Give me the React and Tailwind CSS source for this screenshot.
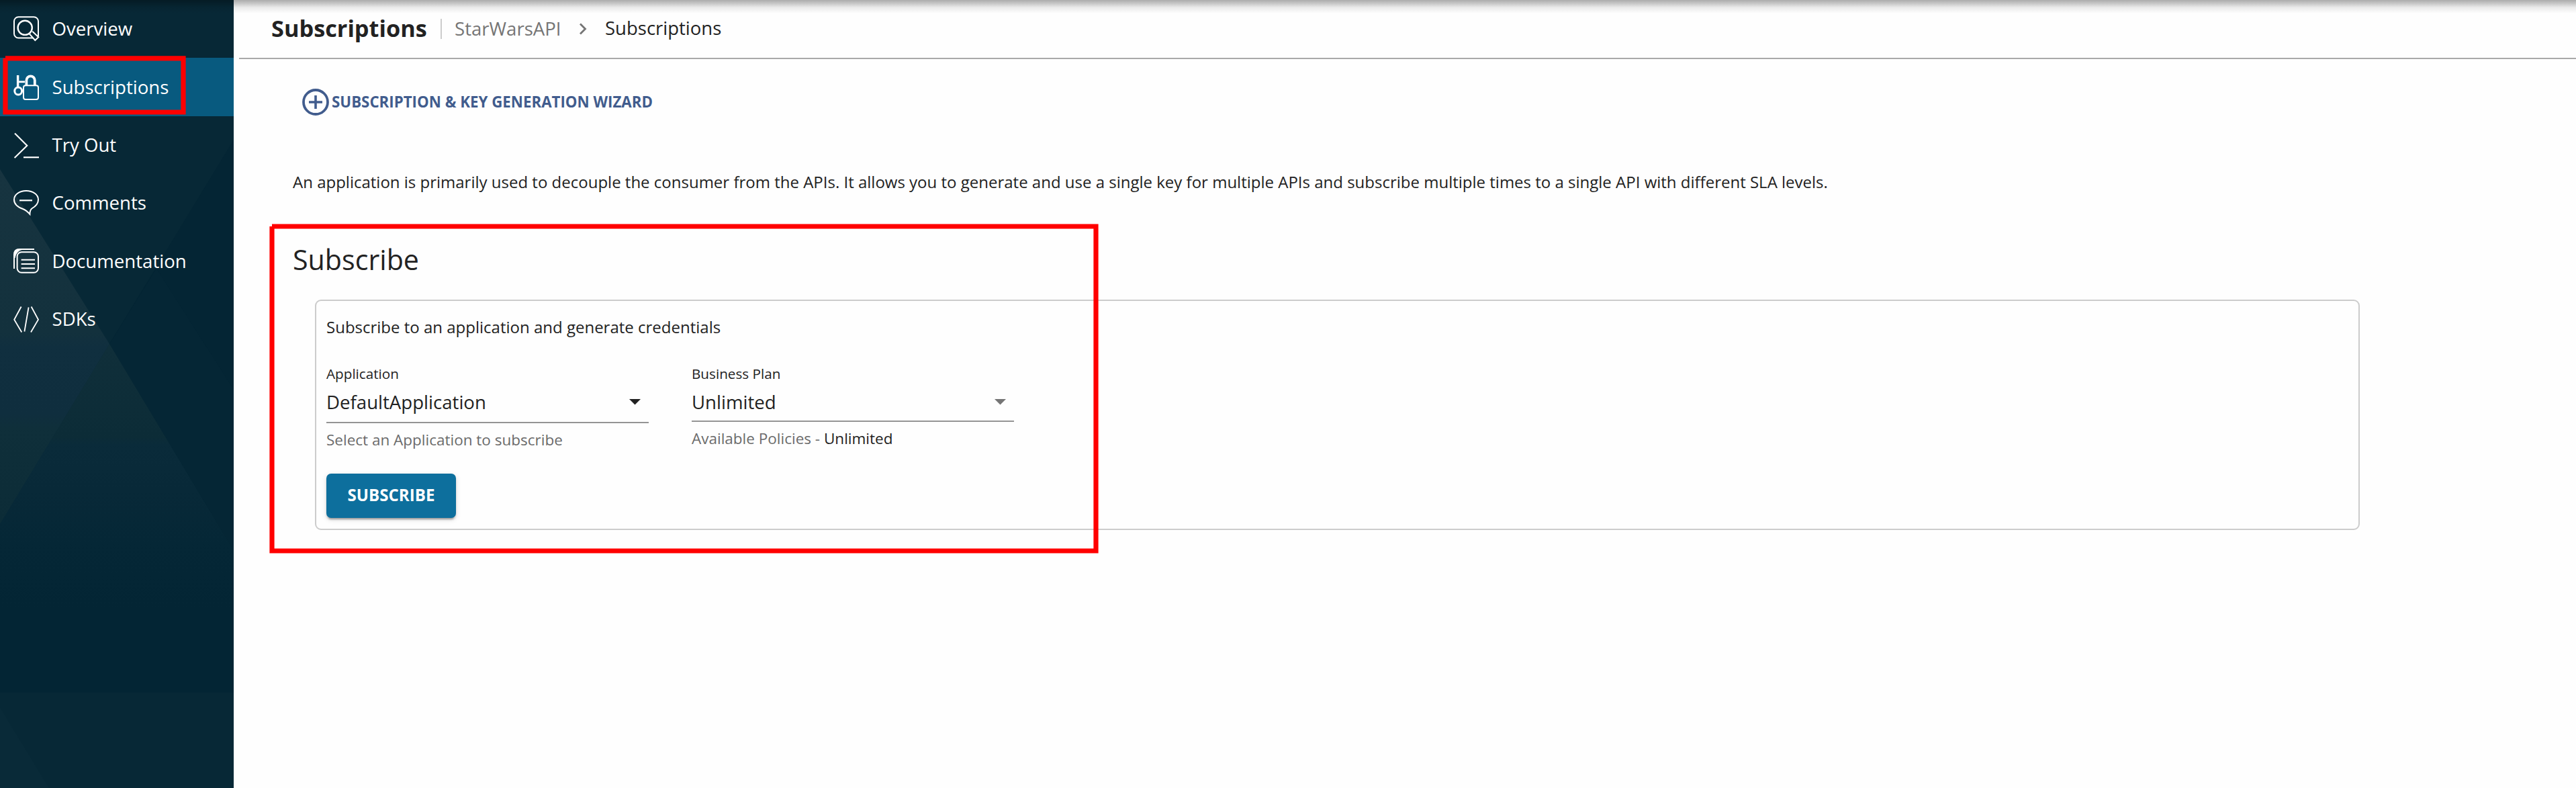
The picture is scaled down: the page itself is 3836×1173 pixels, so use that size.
import React from "react";

function OverviewIcon() {
  return (
    <>
      <path d="M29 32.5H7.5A6.5 6.5 0 0 1 1 26V7.7A6.5 6.5 0 0 1 7.5 1.2H30.5A6.5 6.5 0 0 1 37 7.7V30" strokeWidth="2" />
      <circle cx="17.2" cy="17.3" r="10.6" strokeWidth="2.4" />
      <path d="M23.8 26.4 32.3 36 37.3 31.2 28.2 22.8" strokeWidth="2" />
    </>
  );
}

function SubscriptionsIcon() {
  return (
    <>
      <path d="M6.6 1V19" strokeWidth="3.4" />
      <path d="M6.6 10.8H17" strokeWidth="2.8" />
      <circle cx="7.2" cy="24.5" r="5.4" strokeWidth="3" />
      <rect x="15" y="16.3" width="22" height="20.6" rx="3" strokeWidth="2" />
      <path d="M19.4 16V8.6a6.2 6.2 0 0 1 12.4 0V16" strokeWidth="3.8" />
    </>
  );
}

function TryOutIcon() {
  return (
    <>
      <path d="M2 1.5 20.3 19.8 1.6 38" strokeWidth="2.1" />
      <path d="M15 37.2H38" strokeWidth="2.2" />
    </>
  );
}

function CommentsIcon() {
  return (
    <>
      <path d="M19 1C9 1 1 6.5 1 14.2 1 22 8 25.8 14 28c4 1.5 7 4 10.4 7.9C24.4 32 24.7 29 28 27c6-3.6 9-7 9-12.8C37 6.5 29 1 19 1Z" strokeWidth="2" />
      <path d="M9 15.3H28" strokeWidth="2.2" />
    </>
  );
}

function DocumentationIcon() {
  return (
    <>
      <path d="M1 30V9Q1 1 9 1H31" strokeWidth="2" />
      <path d="M1 14V8Q1 1 8 1H14Q4 3 2 14Z" fill="white" strokeWidth="1" />
      <rect x="5.6" y="5.2" width="31.4" height="30.6" rx="6.5" strokeWidth="2" />
      <path d="M11.6 16.7H32M11.6 23H32M11.6 29.3H32" strokeWidth="2" />
    </>
  );
}

function SdksIcon() {
  return <path d="M11.6 0.5 1.2 19.7 12.3 38.5M26.6 0.5 37 19.7 26 38.5M22.6 1.5 16.4 37.5" strokeWidth="1.8" />;
}

const NAV = [
  { label: "Overview", Icon: OverviewIcon },
  { label: "Subscriptions", Icon: SubscriptionsIcon, active: true },
  { label: "Try Out", Icon: TryOutIcon },
  { label: "Comments", Icon: CommentsIcon },
  { label: "Documentation", Icon: DocumentationIcon },
  { label: "SDKs", Icon: SdksIcon },
];

function SidebarBackdrop() {
  return (
    <svg className="absolute inset-0" width="348" height="1173" viewBox="0 0 348 1173">
      <defs>
        <linearGradient id="left" x1="0" y1="252" x2="0" y2="780" gradientUnits="userSpaceOnUse">
          <stop offset="0" stopColor="#173440" />
          <stop offset="0.46" stopColor="#13313d" />
          <stop offset="0.5" stopColor="#102f3f" />
          <stop offset="0.69" stopColor="#0f2e3e" />
          <stop offset="0.73" stopColor="#0f2f3a" />
          <stop offset="1" stopColor="#0c2c37" />
        </linearGradient>
        <linearGradient id="lower" x1="0" y1="512" x2="0" y2="907" gradientUnits="userSpaceOnUse">
          <stop offset="0" stopColor="#102f3a" />
          <stop offset="0.35" stopColor="#0c2c37" />
          <stop offset="0.38" stopColor="#0a2b3a" />
          <stop offset="0.55" stopColor="#082938" />
          <stop offset="0.75" stopColor="#052736" />
          <stop offset="1" stopColor="#032534" />
        </linearGradient>
      </defs>
      <rect width="348" height="1173" fill="#072836" />
      <path d="M348 208 163 512 348 820Z" fill="#042534" />
      <path d="M163 512 233 400 348 580V820Z" fill="#052635" />
      <path d="M0 252 163 512 0 780Z" fill="url(#left)" />
      <path d="M163 512 348 820V1173H0V780Z" fill="url(#lower)" />
      <path d="M0 1031H348V1173H0Z" fill="#072836" />
      <path d="M0 1053 73 1173H0Z" fill="#092a38" />
    </svg>
  );
}

function Sidebar() {
  return (
    <aside className="relative w-[348px] shrink-0 overflow-hidden">
      <SidebarBackdrop />
      <nav className="relative flex flex-col">
        {NAV.map(({ label, Icon, active }) => (
          <a key={label} className={active ? "flex h-[86.4px] items-center bg-[#085a7f] pl-5" : "flex h-[86.4px] items-center pl-5"}>
            <svg className="shrink-0 overflow-visible" width="38" height="38" viewBox="0 0 38 38" fill="none" stroke="white">
              <Icon />
            </svg>
            <span className="ml-[19.5px] pb-[2px] text-[27.6px] leading-[38px] text-white">{label}</span>
          </a>
        ))}
      </nav>
    </aside>
  );
}

function Header() {
  return (
    <header className="ml-2 flex h-[88px] items-center border-b-2 border-[#a9a9a9] pb-[2px] pl-12">
      <h1 className="w-[252px] text-[34.3px] leading-[48px] font-bold whitespace-nowrap">Subscriptions</h1>
      <div className="mt-[2px] h-[30px] w-[2px] bg-[#cccccc]" />
      <span className="ml-[19px] w-[181px] text-[27.6px] leading-[38px] text-[#757575]">StarWarsAPI</span>
      <svg className="mt-[2px] mr-[23px]" width="20" height="20" viewBox="0 0 20 20" fill="none" stroke="#757575" strokeWidth="2.8">
        <path d="M6 2.5 13.5 10 6 17.5" />
      </svg>
      <span className="text-[27.5px] leading-[38px]">Subscriptions</span>
    </header>
  );
}

function SelectField({ label, value, arrow, box, children }) {
  return (
    <div className="w-[480px]">
      <div className="text-[20.7px] leading-[28px]">{label}</div>
      <div className={box}>
        <span className="text-[27.6px] leading-[42px]">{value}</span>
        <svg className="mt-[17px] mr-[12px]" width="17" height="9" viewBox="0 0 17 9">
          <path d="M0 0H17L8.5 8.5Z" fill={arrow} />
        </svg>
      </div>
      <div className="mt-[10px] text-[22.5px] leading-[30px] text-[#6b6b6b]">{children}</div>
    </div>
  );
}

export default function App() {
  return (
    <div className="relative flex h-[1173px] w-[3836px] overflow-hidden bg-[#fefefe] font-['Open_Sans',sans-serif] text-[#222222]">
      <Sidebar />
      <main className="min-w-0 flex-1">
        <Header />
        <button className="mt-10 ml-[98px] flex h-12 items-center text-[#415c8d]">
          <svg width="48" height="48" viewBox="0 0 24 24" fill="none" stroke="currentColor">
            <circle cx="12" cy="12" r="9" strokeWidth="1.9" />
            <path d="M12 7V17M7 12H17" strokeWidth="1.8" />
          </svg>
          <span className="text-[22.3px] leading-[38px] font-bold">SUBSCRIPTION &amp; KEY GENERATION WIZARD</span>
        </button>
        <section className="pl-[88px]">
          <p className="mt-[78px] text-[24px] leading-[34px]">
            An application is primarily used to decouple the consumer from the APIs. It allows you to generate and use a single key for multiple APIs and subscribe multiple times to a single API with different SLA levels.
          </p>
          <h2 className="mt-[73px] text-[41.2px] leading-[50px]">Subscribe</h2>
          <div className="mt-[35px] ml-[33px] h-[343px] w-[3045px] rounded-[9px] border-2 border-[#cccccc] pt-[22px] pl-[15px]">
            <p className="text-[24px] leading-[34px]">Subscribe to an application and generate credentials</p>
            <div className="mt-[38px] flex gap-16">
              <SelectField
                label="Application"
                value="DefaultApplication"
                arrow="#212121"
                box="flex h-[60px] items-start justify-between border-b-2 border-[#949494] pt-[7px]"
              >
                Select an Application to subscribe
              </SelectField>
              <SelectField
                label="Business Plan"
                value="Unlimited"
                arrow="#757575"
                box="flex h-[58px] items-start justify-between border-b-2 border-[#949494] pt-[7px]"
              >
                Available Policies - <span className="text-[#222222]">Unlimited</span>
              </SelectField>
            </div>
            <button className="mt-[35px] flex h-[66px] w-[193px] items-center justify-center rounded-[7px] bg-[#0d6f9d] pb-[2px] text-[24.1px] leading-[38px] font-bold text-white shadow-[0_5px_2px_-3px_rgba(0,0,0,0.2),0_3px_3px_0_rgba(0,0,0,0.14),0_2px_8px_0_rgba(0,0,0,0.12)]">
              SUBSCRIBE
            </button>
          </div>
        </section>
      </main>
      <div className="pointer-events-none absolute inset-x-0 top-0 h-5 bg-[linear-gradient(to_bottom,rgba(0,0,0,0.32)_0px,rgba(0,0,0,0.22)_5px,rgba(0,0,0,0.08)_11px,rgba(0,0,0,0)_20px)]" />
      {/* Red callouts over the active menu entry and the subscribe form */}
      <svg className="pointer-events-none absolute inset-0" width="3836" height="1173" fill="none" stroke="#ff0000" strokeWidth="7.2">
        <path d="M8 86.8H273V167H8V86.8" />
        <path d="M405 337H1632V820H405V337" />
      </svg>
    </div>
  );
}
